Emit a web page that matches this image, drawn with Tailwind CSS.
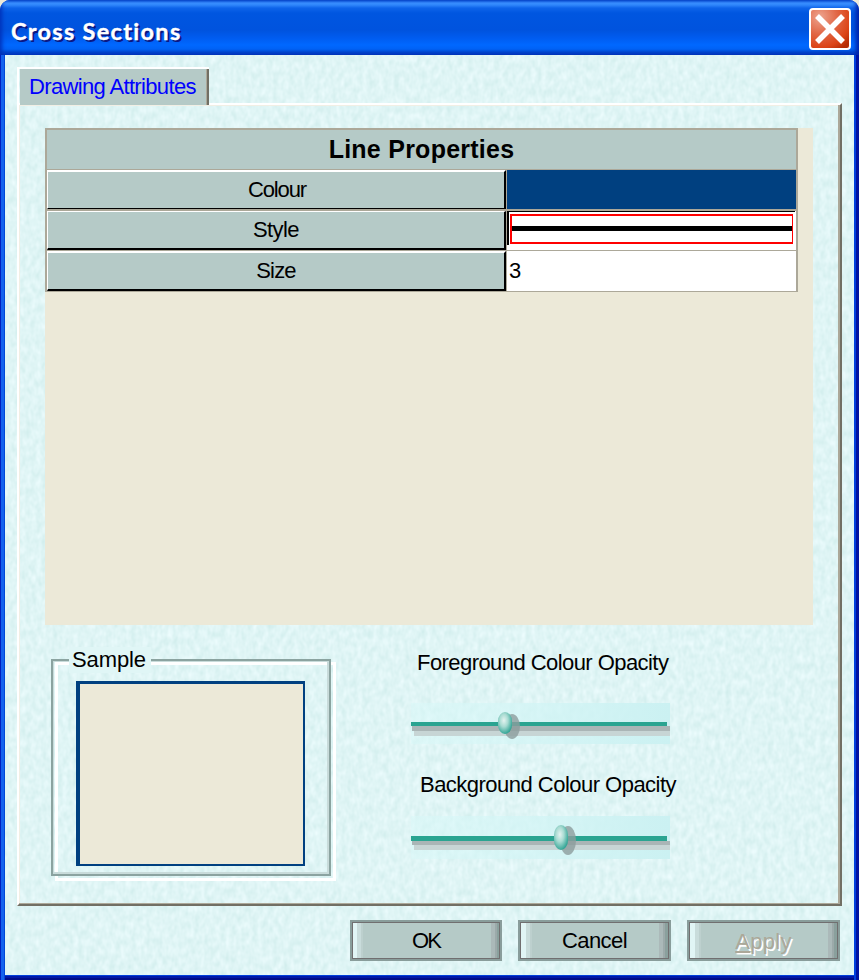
<!DOCTYPE html>
<html lang="en">
<head>
<meta charset="utf-8">
<title>Cross Sections</title>
<script src="https://cdn.jsdelivr.net/npm/@tailwindcss/browser@4"></script>
</head>
<body class="bg-[#ece9d8] overflow-hidden">
<main class="relative w-[859px] h-[980px] flex flex-col overflow-hidden rounded-t-[10px] bg-[#0054e3] text-[22px] leading-[26px] text-black font-['Liberation_Sans',Arial,sans-serif]">
  <header class="h-[55px] shrink-0 flex items-start justify-between pl-[11px] pr-[8px] bg-[linear-gradient(180deg,#0a58dc_0,#3a90ff_3px,#2f86fb_5px,#0e64ea_8px,#0056e0_13px,#0053de_30px,#005cf0_38px,#0068ff_45px,#0062f5_49px,#0047cf_52px,#003cc0_55px)] shadow-[inset_4px_0_4px_-2px_#0030b8,inset_-4px_0_4px_-1px_#0020a8]">
    <h1 class="pt-[18px] font-bold text-[23.5px] leading-[26px] text-white font-[Lato,'Liberation_Sans',sans-serif] tracking-[1.3px] [text-shadow:2px_2px_0_#0a1883] [-webkit-text-stroke:0.4px_white]">Cross Sections</h1>
    <button class="mt-[8px] w-[42px] h-[42px]" aria-label="Close">
      <svg width="42" height="42" viewBox="0 0 42 42">
        <defs><radialGradient id="red" cx=".25" cy=".2" r=".95"><stop offset="0" stop-color="#eda48f"/><stop offset=".45" stop-color="#e16746"/><stop offset=".8" stop-color="#dc4416"/><stop offset="1" stop-color="#b52c05"/></radialGradient></defs>
        <rect x="1" y="1" width="40" height="40" rx="3" fill="url(#red)" stroke="#fff" stroke-width="2"/>
        <path d="M8 8L34 34M34 8L8 34" stroke="#fff" stroke-width="5.5"/>
      </svg>
    </button>
  </header>
  <div class="h-[925px] pl-[5px] pr-[5px] pb-[5px] bg-[linear-gradient(90deg,#0020c0_0_1px,#1462ee_1px_4px,#0048d8_4px_5px,transparent_5px_854px,#0040dc_854px_856px,#0012a0_856px),linear-gradient(180deg,#0040dc_0_921px,#0018a8_921px_923px,#000c88_923px)]">
    <div class="relative h-[920px] pt-[12px] pl-[12px] bg-[#e0f6f6]">
      <svg class="absolute inset-0" width="849" height="920">
        <filter id="paper" x="0" y="0" width="100%" height="100%" color-interpolation-filters="sRGB">
          <feTurbulence type="fractalNoise" baseFrequency="0.19 0.12" numOctaves="2" seed="4"/>
          <feColorMatrix values="0.13 0 0 0 0.81  0.07 0 0 0 0.925  0.08 0 0 0 0.921  0 0 0 0 1"/>
        </filter>
        <rect width="849" height="920" filter="url(#paper)"/>
      </svg>
      <div class="relative z-10 w-[192px] h-[38px] -mb-[2px] border-t-[2px] border-l-[2px] border-white">
        <div class="ml-px h-[36px] bg-[#b5cac7] border-r-[2px] border-[#716f64] shadow-[inset_-1px_0_0_#aca899] pl-[9px] pt-[5px] text-[#0000ff] tracking-[-0.65px] whitespace-nowrap">Drawing Attributes</div>
      </div>
      <section class="relative w-[825px] h-[803px] border-2 border-t-white border-l-white border-r-[#716f64] border-b-[#716f64] shadow-[inset_-2px_-1px_0_#aca899,inset_1px_1px_0_#f1efe5] pl-[26px] pt-[23px]">
        <div class="w-[768px] h-[497px] bg-[#ece9d8]">
          <div class="w-[753px] h-[164px] border-2 border-b border-[#aca899] bg-[#aca899]">
            <div class="h-[39px] bg-[#b5cac7] text-center font-bold text-[25px] leading-[38px] tracking-[0.25px]">Line Properties</div>
            <div class="mt-px h-[39px] flex gap-px">
              <div class="w-[459px] bg-[#b5cac7] border-t-2 border-l border-t-white border-l-white border-r-2 border-b border-r-black border-b-black text-center leading-[35px] tracking-[-1.1px] pl-[2px]">Colour</div>
              <div class="flex-1 bg-[#004080]"></div>
            </div>
            <div class="mt-[2px] h-[39px] flex gap-px">
              <div class="w-[459px] bg-[#b5cac7] border-t border-l border-t-white border-l-white border-r-2 border-b-2 border-r-black border-b-black text-center leading-[36px] tracking-[-0.6px]">Style</div>
              <div class="flex-1 bg-white">
                <div class="w-[288px] h-[34px] border-t border-l-2 border-black pt-[2px] pl-px">
                  <div class="w-[283px] h-[30px] border-2 border-r border-[#f00] pt-[10px]"><div class="h-[5px] bg-black"></div></div>
                </div>
              </div>
            </div>
            <div class="mt-px h-[40px] flex gap-px">
              <div class="w-[459px] bg-[#b5cac7] border-t-2 border-l border-t-white border-l-white border-r-2 border-b-2 border-r-black border-b-black text-center leading-[36px] tracking-[-0.8px]">Size</div>
              <div class="flex-1 bg-white pl-[2px] leading-[40px]">3</div>
            </div>
          </div>
        </div>
        <div class="flex mt-[20px]">
          <div class="relative ml-[6px] mt-[14px] w-[285px] h-[222px]">
            <div class="absolute left-[4px] top-[3px] w-[281px] h-[219px] border-[3px] border-white"></div>
            <div class="relative w-[280px] h-[217px] border-2 border-[#8ba3a0] shadow-[inset_-2px_-2px_0_#c8dbda,inset_1px_1px_0_#c8dbda] pl-[23px] pt-[20px]">
              <span class="absolute left-[16px] top-[-14px] h-[26px] w-[82px] bg-[#e0f6f6] pl-[3px] tracking-[-0.1px]">Sample</span>
              <div class="w-[229px] h-[185px] bg-[#ece9d8] border-[#004080] border-l-4 border-t-[3px] border-r-2 border-b-2"></div>
            </div>
          </div>
          <div class="ml-[75px] pt-[5px]">
            <div class="pl-[6px] tracking-[-0.56px] whitespace-nowrap">Foreground Colour Opacity</div>
            <svg class="mt-[27px] block" width="262" height="41" viewBox="0 0 262 41">
              <defs>
                <linearGradient id="band"><stop offset="0" stop-color="#d8f8f8" stop-opacity=".5"/><stop offset="1" stop-color="#cbf1f2"/></linearGradient>
                <radialGradient id="knob" cx=".42" cy=".38" r=".65"><stop offset="0" stop-color="#e4f3f0"/><stop offset=".45" stop-color="#a8dbd2"/><stop offset="1" stop-color="#2ba292"/></radialGradient>
              </defs>
              <rect width="259" height="41" fill="url(#band)"/>
              <rect x="1" y="23" width="258" height="5" fill="#aab5b6"/><rect x="3" y="28" width="256" height="5" fill="#c7d5d5"/>
              <rect y="19" width="256" height="4" fill="#2aa491"/>
              <ellipse cx="101" cy="23.5" rx="8" ry="12.5" fill="#8c9c9c" fill-opacity=".8"/>
              <rect x="87" y="9" width="14" height="22" rx="7" ry="9" fill="url(#knob)"/>
            </svg>
            <div class="pl-[9px] mt-[28px] tracking-[-0.52px] whitespace-nowrap">Background Colour Opacity</div>
            <svg class="mt-[18px] block" width="262" height="43" viewBox="0 0 262 43">
              <rect width="259" height="43" fill="url(#band)"/>
              <rect x="1" y="25" width="258" height="4" fill="#aab5b6"/><rect x="3" y="29" width="256" height="5" fill="#c7d5d5"/>
              <rect y="20" width="256" height="5" fill="#2aa491"/>
              <ellipse cx="157" cy="24.5" rx="8" ry="14.5" fill="#8c9c9c" fill-opacity=".8"/>
              <rect x="143" y="9" width="14" height="25" rx="7" ry="10" fill="url(#knob)"/>
            </svg>
          </div>
        </div>
      </section>
      <footer class="relative mt-[14px] ml-[333px] flex gap-[16px]">
        <button class="w-[152px] h-[41px] border-2 border-[#899d9b] bg-[#b5cac7]"><span class="flex h-[37px] border border-[#716f70] items-center justify-center pt-[1px] tracking-[-1.8px] bg-[linear-gradient(90deg,#e1f5f5_0_4px,#c9dcdb_4px_8px,#bdd0ce_8px_10px,#b5cac7_10px_138px,#abb9b9_138px_142px,#9caaaa_142px_144px,#8aa09d_144px)]">OK</span></button>
        <button class="w-[153px] h-[41px] border-2 border-[#899d9b] bg-[#b5cac7]"><span class="flex h-[37px] border border-[#716f70] items-center justify-center pt-[1px] tracking-[-0.6px] bg-[linear-gradient(90deg,#e1f5f5_0_5px,#c9dcdb_5px_9px,#bdd0ce_9px_11px,#b5cac7_11px_138px,#abb9b9_138px_142px,#9caaaa_142px_144px,#8aa09d_144px)]">Cancel</span></button>
        <button class="w-[153px] h-[41px] border-2 border-[#899d9b] bg-[#b5cac7]"><span class="flex h-[37px] border border-[#716f70] items-center justify-center pt-[3px] tracking-[0.3px] text-[#aca899] [text-shadow:1.5px_1.5px_0_#fff] bg-[linear-gradient(90deg,#e1f5f5_0_5px,#c9dcdb_5px_9px,#bdd0ce_9px_11px,#b5cac7_11px_138px,#abb9b9_138px_142px,#9caaaa_142px_144px,#8aa09d_144px)]"><u>A</u>pply</span></button>
      </footer>
    </div>
  </div>
</main>
</body>
</html>
